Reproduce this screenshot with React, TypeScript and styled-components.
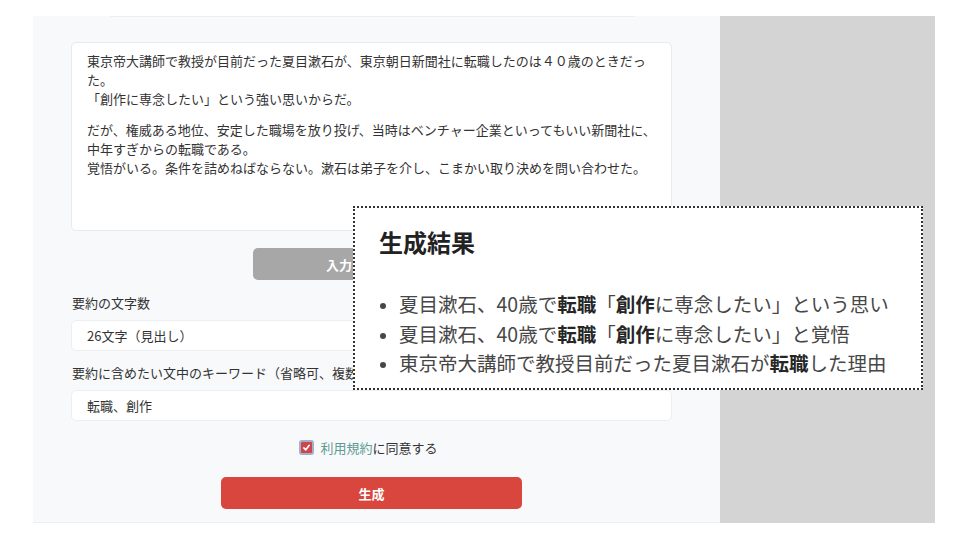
import React from "react";
import styled, { createGlobalStyle } from "styled-components";

const GlobalStyle = createGlobalStyle`
  html, body {
    margin: 0;
    padding: 0;
    background: #ffffff;
  }
  body {
    font-family: "Noto Sans CJK JP", "Noto Sans", sans-serif;
    color: #333;
  }
`;

const Page = styled.div`
  position: relative;
  width: 960px;
  height: 540px;
  box-sizing: border-box;
  padding: 16px 0 0 33px;
  display: flex;
  align-items: flex-start;
  overflow: hidden;
`;

const Main = styled.div`
  width: 687px;
  background: #f8f9fb;
  border-bottom: 1px solid #eceef1;
  display: flex;
  flex-direction: column;
  padding-bottom: 13px;
`;

const SidePanel = styled.div`
  width: 215px;
  height: 507px;
  background: #d4d4d4;
`;

const TopRule = styled.div`
  margin: 0 85px 0 77px;
  border-top: 1px solid #eceef1;
`;

const Form = styled.div`
  display: flex;
  flex-direction: column;
  margin: 25px 48px 0 38px;
`;

const SourceText = styled.div`
  box-sizing: border-box;
  height: 189px;
  background: #fff;
  border: 1px solid #e8eaed;
  border-radius: 5px;
  padding: 8px 15px 6px;
  font-size: 13px;
  line-height: 19px;
  color: #333;

  p {
    margin: 0 0 12px;
  }
`;

const Button = styled.button<{ $variant: "gray" | "red"; $width: number }>`
  align-self: center;
  width: ${(p) => p.$width}px;
  height: 32px;
  border: none;
  border-radius: 5px;
  background: ${(p) => (p.$variant === "red" ? "#d8463e" : "#a7a7a7")};
  color: #fff;
  font-family: inherit;
  font-size: 13px;
  font-weight: 700;
  cursor: pointer;
`;

const Label = styled.label`
  display: block;
  font-size: 13px;
  line-height: 19px;
  color: #333;
  margin: 12px 0 8px 1px;
`;

const Field = styled.div`
  box-sizing: border-box;
  height: 31px;
  background: #fff;
  border: 1px solid #eceef0;
  border-radius: 5px;
  padding: 0 15px;
  display: flex;
  align-items: center;
  font-size: 13px;
  color: #333;
`;

const AgreeRow = styled.div`
  display: flex;
  align-items: center;
  justify-content: center;
  gap: 6px;
  margin: 17px 0 20px;
  font-size: 13px;
  line-height: 19px;
  padding-right: 6px;
`;

const CheckBox = styled.span`
  box-sizing: border-box;
  width: 15px;
  height: 15px;
  border-radius: 3px;
  background: #d0454a;
  border: 2px solid #a3aed0;
  display: inline-flex;
  align-items: center;
  justify-content: center;
`;

const TermsLink = styled.span`
  color: #5e9c95;
`;

const ResultPopup = styled.div`
  position: absolute;
  left: 353px;
  top: 206px;
  width: 570px;
  height: 184px;
  box-sizing: border-box;
  background: #fff;
  border: 2px dotted #333;
  padding: 16px 24px 0;
`;

const ResultTitle = styled.h2`
  margin: 0;
  font-size: 24px;
  line-height: 36px;
  font-weight: 700;
  color: #222;
`;

const ResultList = styled.ul`
  margin: 29px 0 0;
  padding-left: 20px;
  font-size: 19.5px;
  line-height: 29.5px;
  color: #474747;
  white-space: nowrap;

  li::marker {
    font-size: 16px;
  }

  b {
    color: #262626;
  }
`;

const results: { parts: (string | { b: string })[] }[] = [
  { parts: ["夏目漱石、40歳で", { b: "転職" }, "「", { b: "創作" }, "に専念したい」という思い"] },
  { parts: ["夏目漱石、40歳で", { b: "転職" }, "「", { b: "創作" }, "に専念したい」と覚悟"] },
  { parts: ["東京帝大講師で教授目前だった夏目漱石が", { b: "転職" }, "した理由"] },
];

export default function App() {
  return (
    <>
      <GlobalStyle />
      <Page>
        <Main>
          <TopRule />
          <Form>
            <SourceText>
              <p>
                東京帝大講師で教授が目前だった夏目漱石が、東京朝日新聞社に転職したのは４０歳のときだっ
                <br />
                た。
                <br />
                「創作に専念したい」という強い思いからだ。
              </p>
              <p>
                だが、権威ある地位、安定した職場を放り投げ、当時はベンチャー企業といってもいい新聞社に、
                <br />
                中年すぎからの転職である。
                <br />
                覚悟がいる。条件を詰めねばならない。漱石は弟子を介し、こまかい取り決めを問い合わせた。
              </p>
            </SourceText>
            <Button $variant="gray" $width={237} style={{ marginTop: 17 }}>
              入力をリセット
            </Button>
            <Label style={{ marginTop: 13 }}>要約の文字数</Label>
            <Field>26文字（見出し）</Field>
            <Label>要約に含めたい文中のキーワード（省略可、複数可）</Label>
            <Field>転職、創作</Field>
            <AgreeRow>
              <CheckBox>
                <svg width="9" height="9" viewBox="0 0 10 10">
                  <polyline
                    points="2,5.5 4.2,7.6 8,2.6"
                    fill="none"
                    stroke="#fff"
                    strokeWidth="1.8"
                    strokeLinecap="round"
                    strokeLinejoin="round"
                  />
                </svg>
              </CheckBox>
              <span>
                <TermsLink>利用規約</TermsLink>に同意する
              </span>
            </AgreeRow>
            <Button $variant="red" $width={301}>
              生成
            </Button>
          </Form>
        </Main>
        <SidePanel />
        <ResultPopup>
          <ResultTitle>生成結果</ResultTitle>
          <ResultList>
            {results.map((r, i) => (
              <li key={i}>
                {r.parts.map((p, j) =>
                  typeof p === "string" ? <span key={j}>{p}</span> : <b key={j}>{p.b}</b>
                )}
              </li>
            ))}
          </ResultList>
        </ResultPopup>
      </Page>
    </>
  );
}
